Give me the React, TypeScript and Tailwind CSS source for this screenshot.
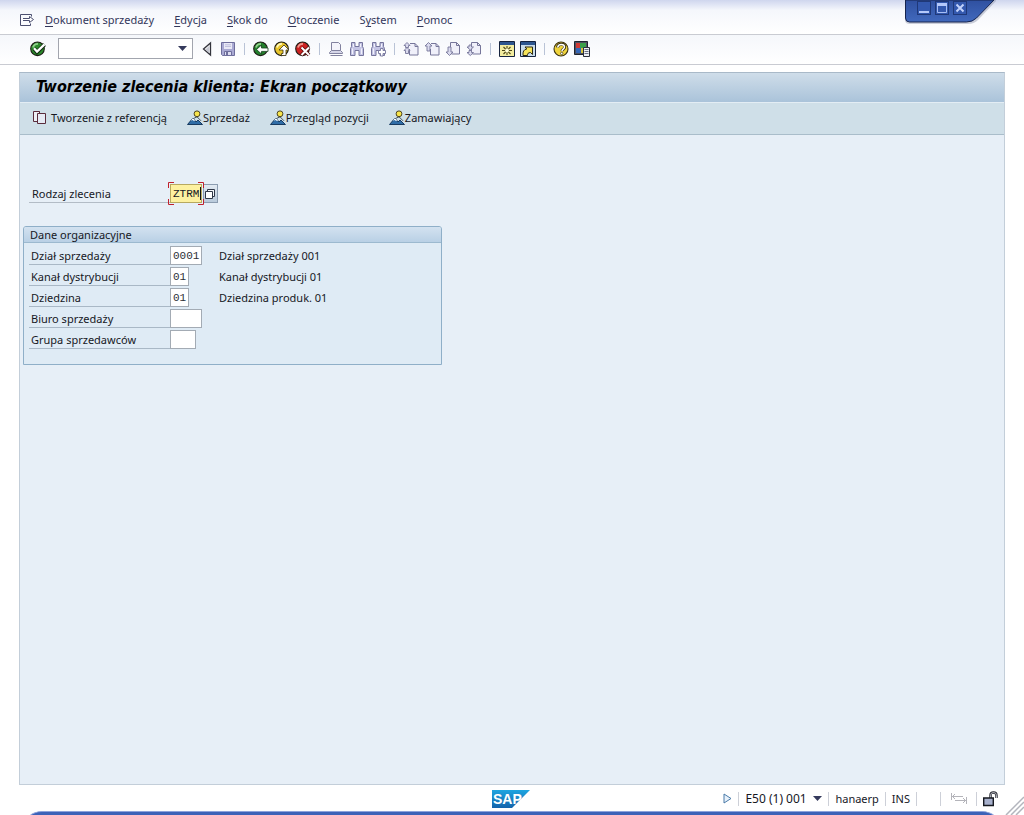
import type { ReactNode } from "react";

type MenuItem = { before: string; key: string; after: string };
type OrgField = { id: string; label: string; value: string; description?: string; width: string; maxLength: number };

const menuItems: MenuItem[] = [
  { before: "", key: "D", after: "okument sprzedaży" },
  { before: "", key: "E", after: "dycja" },
  { before: "", key: "S", after: "kok do" },
  { before: "", key: "O", after: "toczenie" },
  { before: "S", key: "y", after: "stem" },
  { before: "", key: "P", after: "omoc" },
];

const orgFields: OrgField[] = [
  { id: "sales-org", label: "Dział sprzedaży", value: "0001", description: "Dział sprzedaży 001", width: "w-[32px]", maxLength: 4 },
  { id: "channel", label: "Kanał dystrybucji", value: "01", description: "Kanał dystrybucji 01", width: "w-[19px]", maxLength: 2 },
  { id: "division", label: "Dziedzina", value: "01", description: "Dziedzina produk. 01", width: "w-[19px]", maxLength: 2 },
  { id: "sales-office", label: "Biuro sprzedaży", value: "", width: "w-[32px]", maxLength: 4 },
  { id: "sales-group", label: "Grupa sprzedawców", value: "", width: "w-[26px]", maxLength: 3 },
];

function Icon({ children }: { children: ReactNode }) {
  return (
    <svg className="block size-4" viewBox="0 0 16 16" fill="none" aria-hidden="true">
      {children}
    </svg>
  );
}

function Ball({ color, shine }: { color: string; shine: string }) {
  return (
    <>
      <circle cx="7.5" cy="7.8" r="6.8" fill={color} stroke="#1c1c14" strokeWidth="1.1" />
      <path d="M3 6.5C3.6 4 5.5 2.8 8 2.8" stroke={shine} strokeWidth="1.8" />
    </>
  );
}

const EnterIcon = () => (
  <Icon>
    <Ball color="#2c8a2c" shine="#8fd08a" />
    <path d="M4 7.5 7 11l7.5-7.5" stroke="#10300f" strokeWidth="4" />
    <path d="M4 7.2 7 10.6l7.5-7.2" stroke="#fff" strokeWidth="2.2" />
  </Icon>
);

const BackwardIcon = () => (
  <Icon>
    <path d="M11.5 2v12L4.5 8z" fill="#f4f4f6" stroke="#33343c" strokeWidth="1.3" />
    <path d="M10.3 5v7L6.5 8.6z" fill="#c6c8d2" />
  </Icon>
);

const SaveIcon = () => (
  <Icon>
    <path d="M1.5 1.5h13v13h-12l-1-1z" fill="#a9a9d3" stroke="#6e6e9c" />
    <path d="M4 2h8v6H4z" fill="#e9e9f6" />
    <path d="M5 3.8h6M5 5.5h6" stroke="#b6b6d8" strokeWidth=".8" />
    <path d="M4.5 10.5h7v4h-7z" fill="#dcdcf0" stroke="#6e6e9c" />
    <path d="M6 11h2v3H6z" fill="#6e6e9c" />
  </Icon>
);

const BackIcon = () => (
  <Icon>
    <Ball color="#23802c" shine="#92d18b" />
    <path d="m3.5 8.5 5-4.5v3H15v3.4H8.5V13z" fill="#fff" stroke="#14401a" strokeWidth=".8" />
  </Icon>
);

const ExitIcon = () => (
  <Icon>
    <Ball color="#e8c52c" shine="#fff7b4" />
    <path d="m10 4 5 5h-3v5.5H7.5v-2H9V9H5z" fill="#fff" stroke="#3e340c" strokeWidth=".8" />
  </Icon>
);

const CancelIcon = () => (
  <Icon>
    <Ball color="#cc2222" shine="#f09a90" />
    <path d="m6.5 6.5 7.5 7.5m0-7.5-7.5 7.5" stroke="#5a0c0c" strokeWidth="3.6" />
    <path d="m6.5 6.5 7.5 7.5m0-7.5-7.5 7.5" stroke="#fff" strokeWidth="2" />
  </Icon>
);

const PrintIcon = () => (
  <Icon>
    <path d="M3.5 9.5v-8h7l2 2v6" fill="#f4f4fb" stroke="#82829f" />
    <path d="M1.5 11.5 3.5 9.5h9l2 2v1h-13z" fill="#d6d6e8" stroke="#82829f" />
    <path d="M2.5 14.5h12" stroke="#82829f" />
  </Icon>
);

const Binoculars = () => (
  <>
    <path d="M1.5 14.5v-7l1-2v-4H6v4h4v-4h3.5v4l1 2v7H10v-5H6v5z" fill="#c4c4e4" stroke="#75759c" />
    <path d="M3.5 7.5V13M12.5 7.5V13M4.5 3v3M11.5 3v3" stroke="#f2f2fb" />
  </>
);

const FindIcon = () => (
  <Icon>
    <Binoculars />
  </Icon>
);

const FindNextIcon = () => (
  <Icon>
    <Binoculars />
    <path d="M10.5 7.5H13v2h2.5v3H13V15h-2.5v-2.5h-2v-3h2z" fill="#fff" stroke="#75759c" strokeWidth=".9" />
  </Icon>
);

// sheet with a folded corner plus one or two arrows on its left side
function PageIcon({ arrows, lowered }: { arrows: string; lowered?: boolean }) {
  return (
    <Icon>
      <path
        d={lowered ? "M5.5 10V1.5h6l3 3V13h-8" : "M7 2.5h5l3 3V14H6.5V8"}
        fill="#f0f0fa"
        stroke="#76769a"
      />
      <path d={lowered ? "M11.5 1.5v3h3" : "M12 2.5v3h3"} stroke="#76769a" />
      <path d={arrows} fill="#dadaee" stroke="#76769a" strokeWidth=".9" />
    </Icon>
  );
}

const NewSessionIcon = () => (
  <Icon>
    <path d="M.5.5h15v15H.5z" fill="#f3eda0" stroke="#15233f" />
    <path d="M1 1h14v3H1z" fill="#2d568f" />
    <path d="M8 5v9M3 9.5h10M4.5 6l7 7M11.5 6l-7 7" stroke="#4a4416" strokeWidth="1.1" />
    <circle cx="8" cy="9.5" r="1.9" fill="#ffffd8" />
  </Icon>
);

const ShortcutIcon = () => (
  <Icon>
    <path d="M.5.5h15v15H.5z" fill="#c9dcea" stroke="#15233f" />
    <path d="M1 1h14v3H1z" fill="#2d568f" />
    <path d="M3 14.500c-.3-4 .8-6 3.800-6.500L5 6h7.500v7.500l-2-2C8.300 11.700 7.300 12.500 7.500 14.500z" fill="#f6e45c" stroke="#2e2a10" />
  </Icon>
);

const HelpIcon = () => (
  <Icon>
    <circle cx="8" cy="8" r="7" fill="#f0d43c" stroke="#3b3210" strokeWidth="1.1" />
    <path d="M4.5 6.5c.3-2.500 2-3.200 3.800-3.200 2.200 0 3.400 1.200 3.400 2.800 0 2-2.700 2.200-2.700 4.200" stroke="#3b3210" strokeWidth="3" />
    <path d="M4.7 6.5c.3-2.300 1.900-3 3.600-3 2 0 3.200 1.100 3.200 2.600 0 2-2.600 2.100-2.600 4.100" stroke="#fff" strokeWidth="1.5" />
    <circle cx="8.7" cy="12.5" r="1.2" fill="#fff" stroke="#3b3210" strokeWidth=".7" />
  </Icon>
);

const LayoutIcon = () => (
  <Icon>
    <path d="M.5.5h13v13H.5z" fill="#4d5160" stroke="#1f2430" />
    <path d="M2 2h4v5H2z" fill="#d03a36" />
    <path d="M6 2h6v5H6z" fill="#3aa04a" />
    <path d="M2 7h5v5H2z" fill="#3567b8" />
    <path d="M7 7h5v5H7z" fill="#d9c23a" />
    <path d="M9.5 6.5h6v9h-6z" fill="#eef0f5" stroke="#2a2f3c" />
    <path d="M10.5 8.5h4M10.5 10.5h4M10.5 12.5h4" stroke="#6a7084" />
  </Icon>
);

const MenuIcon = () => (
  <Icon>
    <path d="M12.5 4.5v-2h-11v11h10v-2" stroke="#4b4f70" />
    <path d="M4 6.5h6.5v-2l4 3-4 3v-2H4" fill="#fff" stroke="#4b4f70" />
  </Icon>
);

const CopyIcon = () => (
  <Icon>
    <path d="M1.5 1.5h6v10h-6z" fill="#eef0f6" stroke="#5a2c3c" />
    <path d="M5.5 3.5h8v10h-8z" fill="#e6eaf4" stroke="#5a2c3c" />
    <path d="M7.5 1.5v2" stroke="#5a2c3c" />
  </Icon>
);

const OverviewIcon = () => (
  <Icon>
    <path d="M.5 14.5 6 8l3 4 2-2 4.5 4.5z" fill="#2f6ca6" stroke="#173a60" />
    <path d="M6 8 3.8 10.7l1.8-.7 1.4 1 1-.5z" fill="#fff" />
    <path d="M6.5 8.5 10 6.8l4 4" stroke="#22303c" strokeWidth=".8" />
    <circle cx="10" cy="3.8" r="2.9" fill="#f7e44c" stroke="#4c4420" />
  </Icon>
);

const CaretIcon = () => (
  <svg className="block h-[5px] w-[9px]" viewBox="0 0 9 5" aria-hidden="true">
    <path d="M0 0h9L4.5 5z" fill="#353a5c" />
  </svg>
);

const toolbarGroups: { label: string; icon: ReactNode }[][] = [
  [
    { label: "Wstecz", icon: <BackIcon /> },
    { label: "Zakończ", icon: <ExitIcon /> },
    { label: "Anuluj", icon: <CancelIcon /> },
  ],
  [
    { label: "Drukuj", icon: <PrintIcon /> },
    { label: "Szukaj", icon: <FindIcon /> },
    { label: "Szukaj dalej", icon: <FindNextIcon /> },
  ],
  [
    { label: "Pierwsza strona", icon: <PageIcon arrows="M4 1.5 7 4.5H5.5v2h-3v-2H1zM4 6.5l3 3H5.5v3h-3v-3H1z" /> },
    { label: "Poprzednia strona", icon: <PageIcon arrows="m4.5 1.5 3.5 3.5H6v5H3V5H1z" /> },
    { label: "Następna strona", icon: <PageIcon lowered arrows="M3 6h3v5h2l-3.5 3.5L1 11h2z" /> },
    { label: "Ostatnia strona", icon: <PageIcon lowered arrows="M3 4h2.5v2h2L4.3 9 1 6h2zM3 9.5h2.5v2h2l-3.2 3L1 11.5h2z" /> },
  ],
  [
    { label: "Nowa sesja", icon: <NewSessionIcon /> },
    { label: "Utwórz skrót", icon: <ShortcutIcon /> },
  ],
  [
    { label: "Pomoc", icon: <HelpIcon /> },
    { label: "Układ lokalny", icon: <LayoutIcon /> },
  ],
];

function IconButton({ label, children }: { label: string; children: ReactNode }) {
  return (
    <button type="button" aria-label={label} className="size-4 shrink-0">
      {children}
    </button>
  );
}

function WindowControls() {
  return (
    <div className="absolute right-[28px] top-0 h-[26px] w-[92px]">
      <svg className="absolute inset-0 size-full" viewBox="0 0 92 26" aria-hidden="true">
        <defs>
          <linearGradient id="window-tab" x1="0" y1="0" x2="0" y2="1">
            <stop offset="0" stopColor="#2f50a0" />
            <stop offset="1" stopColor="#4169bd" />
          </linearGradient>
        </defs>
        <path d="M1 0v20q0 4 5 4h58q6 0 10-4L92 1V0z" fill="#9aa0b4" opacity=".5" />
        <path d="M1.5 0v18q0 4 4 4h57q6 0 10-4L90 0z" fill="url(#window-tab)" stroke="#16244e" />
      </svg>
      <div className="relative flex gap-[4px] pl-[13px] pt-px">
        <button type="button" aria-label="Minimalizuj" className="size-[14px] border border-[#1f3878] bg-[#3358ae]">
          <svg className="block size-3" viewBox="0 0 12 12"><path d="M1 10h10" stroke="#b4c8fa" strokeWidth="2" /></svg>
        </button>
        <button type="button" aria-label="Maksymalizuj" className="size-[14px] border border-[#1f3878] bg-[#3358ae]">
          <svg className="block size-3" viewBox="0 0 12 12" fill="none"><path d="M1.5 3v7.5h9V3" stroke="#a5bdf5" /><path d="M1 2.5h10" stroke="#b4c8fa" strokeWidth="3" /></svg>
        </button>
        <button type="button" aria-label="Zamknij" className="size-[14px] border border-[#1f3878] bg-[#3358ae]">
          <svg className="block size-3" viewBox="0 0 12 12"><path d="m2.5 2.5 7 7m0-7-7 7" stroke="#c2d2fb" strokeWidth="2" /></svg>
        </button>
      </div>
    </div>
  );
}

function MenuBar() {
  return (
    <nav className="flex h-[35px] items-center gap-[20px] border-b border-[#c9cbd2] bg-linear-to-b from-[#cfd6ee] via-[#f5f7fc] via-30% to-white pl-[19px] pt-[6px] text-[#32365a]">
      <div className="flex items-center gap-[10px]">
        <IconButton label="Menu">
          <MenuIcon />
        </IconButton>
        <MenuButton item={menuItems[0]} />
      </div>
      {menuItems.slice(1).map((item) => (
        <MenuButton key={item.key} item={item} />
      ))}
    </nav>
  );
}

function MenuButton({ item }: { item: MenuItem }) {
  return (
    <button type="button" className="whitespace-nowrap">
      {item.before}
      <u className="underline-offset-2">{item.key}</u>
      {item.after}
    </button>
  );
}

function StandardToolbar() {
  return (
    <div className="flex h-[30px] items-center gap-[5px] border-b border-[#c9cbd2] bg-linear-to-b from-[#f5f7fb] to-white pb-[2px] pl-[30px]">
      <IconButton label="Enter">
        <EnterIcon />
      </IconButton>
      <div className="relative ml-[7px] mr-px">
        <select aria-label="Pole poleceń" className="block h-[21px] w-[135px] appearance-none border border-[#a2a5ae] bg-white px-1">
          <option></option>
        </select>
        <span className="pointer-events-none absolute right-[6px] top-2">
          <CaretIcon />
        </span>
      </div>
      <IconButton label="Ukryj pole">
        <BackwardIcon />
      </IconButton>
      <IconButton label="Zapisz">
        <SaveIcon />
      </IconButton>
      {toolbarGroups.map((group) => (
        <div key={group[0].label} className="flex items-center gap-[5px]">
          <span className="mx-[3px] h-3 w-px bg-[#b9c3d6]" />
          {group.map((tool) => (
            <IconButton key={tool.label} label={tool.label}>
              {tool.icon}
            </IconButton>
          ))}
        </div>
      ))}
    </div>
  );
}

function ApplicationToolbar() {
  return (
    <div className="flex h-[32px] items-center gap-[20px] border-b border-[#a9bdca] bg-[#cfdfe8] pb-px pl-[12px]">
      <button type="button" className="flex items-center gap-[3px] whitespace-nowrap">
        <CopyIcon />
        Tworzenie z referencją
      </button>
      {["Sprzedaż", "Przegląd pozycji", "Zamawiający"].map((label) => (
        <button key={label} type="button" className="flex items-center whitespace-nowrap">
          <OverviewIcon />
          {label}
        </button>
      ))}
    </div>
  );
}

function OrderTypeField() {
  return (
    <div className="flex h-[19px] items-stretch pl-[6px]">
      <label htmlFor="order-type" className="w-[141px] border-b border-[#b3bcc6] pl-[3px] leading-[20px]">
        Rodzaj zlecenia
      </label>
      <div className="relative">
        <input
          id="order-type"
          defaultValue="ZTRM"
          maxLength={4}
          className="block h-[19px] w-[32px] border border-[#b7a960] bg-[#fdf1a0] pl-[2px] font-['Liberation_Mono',monospace] text-[11px] outline-none"
        />
        {/* focus brackets */}
        <svg className="pointer-events-none absolute -left-[2px] -top-[2px] h-[23px] w-[36px]" viewBox="0 0 36 23" fill="none" aria-hidden="true">
          <path d="M.5 6V.5H6M30 .5h5.5V6M35.5 17v5.5H30M6 22.5H.5V17" stroke="#c0202c" />
          <path d="M32.5 5v13" stroke="#111" />
        </svg>
      </div>
      <button type="button" aria-label="Lista wartości" className="ml-px h-[19px] w-[15px] border border-[#8b9cb0] bg-linear-to-b from-[#e2eaf2] to-[#b9cadb]">
        <svg className="block h-[15px] w-[13px]" viewBox="0 0 13 15" fill="none" aria-hidden="true">
          <path d="M3.5 5.5v-2h7v7h-2" fill="#f4f7fa" stroke="#2f3646" />
          <path d="M1.5 5.5h7v7h-7z" fill="#fff" stroke="#2f3646" />
        </svg>
      </button>
    </div>
  );
}

function OrgDataGroup() {
  return (
    <section className="w-[419px] rounded-t-[3px] border border-[#8fafc8] bg-[#dfebf5] pb-[15px]">
      <h2 className="h-4 rounded-t-[2px] border-b border-[#9cb9cf] bg-linear-to-b from-[#d3e2f0] to-[#b9d0e5] pl-[6px] leading-[15px]">
        Dane organizacyjne
      </h2>
      <div className="flex flex-col gap-[2px] pl-[5px] pt-[3px]">
        {orgFields.map((field) => (
          <div key={field.id} className="flex h-[19px]">
            <label htmlFor={field.id} className="w-[141px] border-b border-[#a9b8c6] pl-[2px] leading-[20px]">
              {field.label}
            </label>
            <div className="w-[49px]">
              <input
                id={field.id}
                defaultValue={field.value}
                maxLength={field.maxLength}
                className={`block h-[19px] border border-[#a3abb4] bg-white pl-[2px] font-['Liberation_Mono',monospace] text-[11px] text-[#2b2f36] outline-none ${field.width}`}
              />
            </div>
            <output htmlFor={field.id} className="leading-[20px]">
              {field.description}
            </output>
          </div>
        ))}
      </div>
    </section>
  );
}

const StatusDivider = () => <span className="h-[14px] w-px bg-[#cdd0d8]" />;

function StatusBar() {
  return (
    <footer className="relative grid h-[26px] grid-cols-[1fr_auto_1fr] items-center pt-px pr-[26px] pl-[24px]">
      <span />
      <svg className="h-[18px] w-[38px]" viewBox="0 0 38 18" role="img" aria-label="SAP">
        <defs>
          <linearGradient id="sap-blue" x1="0" y1="0" x2="0" y2="1">
            <stop offset="0" stopColor="#1ea5e0" />
            <stop offset="1" stopColor="#1463ab" />
          </linearGradient>
        </defs>
        <path d="M0 0h38L20 18H0z" fill="url(#sap-blue)" />
        <text x="1" y="14" fill="#fff" fontFamily="Liberation Sans, sans-serif" fontSize="14" fontWeight="700">SAP</text>
      </svg>
      <div className="flex items-center justify-end gap-[6px] whitespace-nowrap">
        <button type="button" aria-label="Pokaż komunikaty" className="w-[9px]">
          <svg className="block h-[11px] w-[9px]" viewBox="0 0 9 11"><path d="M1 1v9l7-4.5z" fill="#e7f1fb" stroke="#4a7ba8" /></svg>
        </button>
        <StatusDivider />
        <button type="button" className="flex min-w-[77px] items-center justify-between gap-[5px] text-[12px]">
          E50 (1) 001
          <CaretIcon />
        </button>
        <StatusDivider />
        <span>hanaerp</span>
        <StatusDivider />
        <span>INS</span>
        <StatusDivider />
        <span className="w-[11px]" />
        <StatusDivider />
        <svg className="ml-1 mr-[3px] h-[13px] w-4" viewBox="0 0 16 13" fill="none" stroke="#b4b4ba" aria-hidden="true">
          <path d="M.5 1v7M1 4.5h11M4 2 1.5 4.5 4 7M15.5 5v7M15 8.5H4M12 6l2.5 2.5L12 11" />
        </svg>
        <StatusDivider />
        <svg className="h-4 w-[15px]" viewBox="0 0 15 16" fill="none" aria-hidden="true">
          <path d="M7.5 7V4.5q0-3 3-3t3 3V7" stroke="#22242c" strokeWidth="2.4" />
          <path d="M7.5 7V4.5q0-3 3-3t3 3V7" stroke="#d9dbe2" strokeWidth=".8" />
          <path d="M.7 7h9.6v7.5H.7z" fill="#a7b0cc" stroke="#16181f" strokeWidth="1.4" />
        </svg>
      </div>
    </footer>
  );
}

export default function App() {
  return (
    <div className="relative flex min-h-screen flex-col bg-white font-['Noto_Sans','Open_Sans',sans-serif] text-[11px] leading-4 text-[#16181f]">
      <MenuBar />
      <StandardToolbar />
      <WindowControls />
      <main className="mx-[19px] mt-[7px] flex flex-1 flex-col border border-[#c3ced9] border-t-[#a9b9c8] bg-[#e7eff7]">
        <h1 className="h-[30px] border-b border-[#e3edf4] bg-linear-to-b from-[#cfdde9] to-[#aac3da] pl-4 font-['DejaVu_Sans_Condensed','DejaVu_Sans',sans-serif] text-[16px] font-bold italic leading-[27px] text-black">
          Tworzenie zlecenia klienta: Ekran początkowy
        </h1>
        <ApplicationToolbar />
        <form className="flex-1 pl-[3px] pt-[49px]" onSubmit={(e) => e.preventDefault()}>
          <OrderTypeField />
          <div className="mt-[23px]">
            <OrgDataGroup />
          </div>
        </form>
      </main>
      <StatusBar />
      {/* lower window frame */}
      <div className="mx-[22px] h-1 overflow-hidden">
        <div className="h-5 rounded-t-[20px] border-t border-[#8ea3dc] bg-[#3c62b8]" />
      </div>
      <svg className="absolute bottom-0 right-0 size-[20px]" viewBox="0 0 20 20" aria-hidden="true">
        <path d="M2 20 20 2M7 20 20 7M12 20l8-8" stroke="#b3b5bd" strokeWidth="1.5" />
      </svg>
    </div>
  );
}
